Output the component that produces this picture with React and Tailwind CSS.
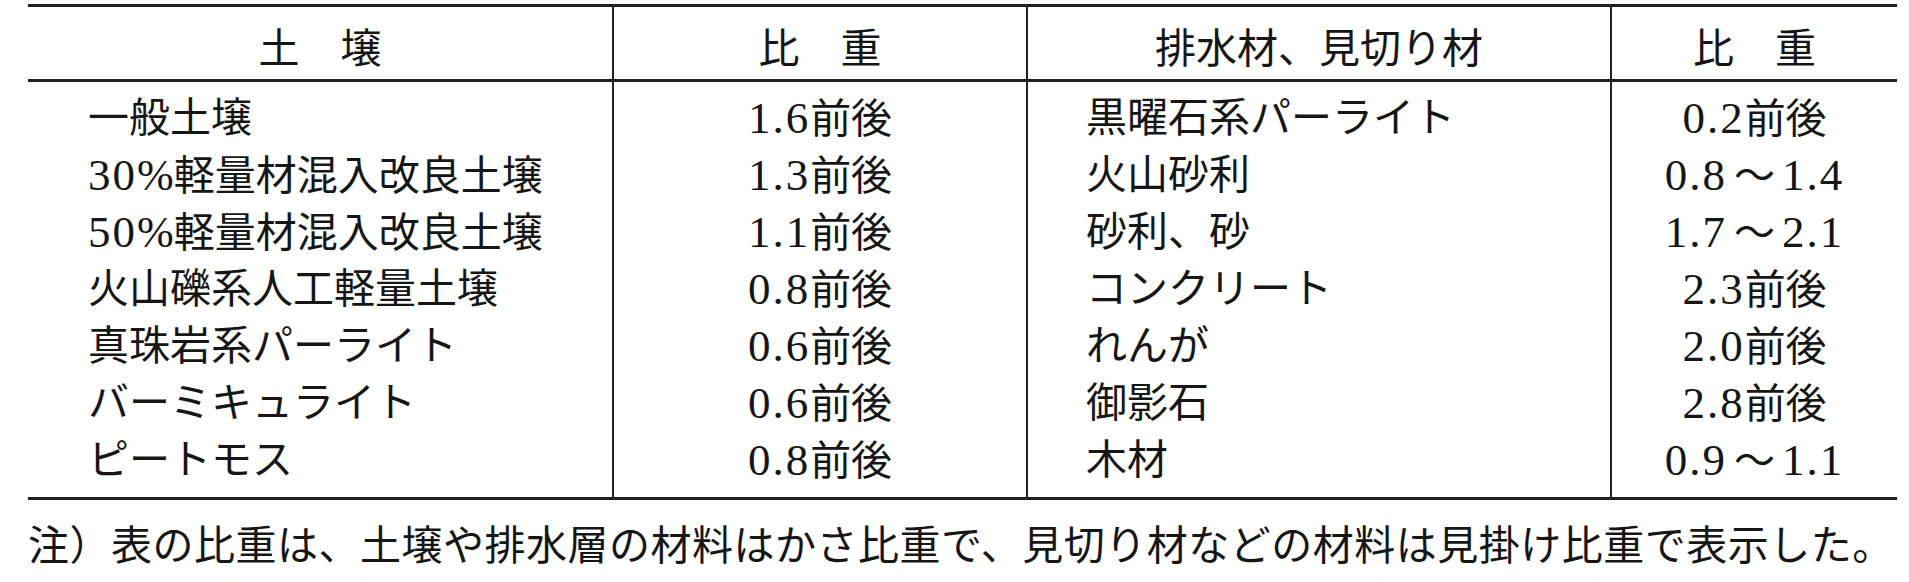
import React from "react";

const FONT = { fontFamily: '"Liberation Serif", "Noto Sans CJK JP", serif' };

const rows = [
  ["一般土壌", { n: "1.6" }, "黒曜石系パーライト", { n: "0.2" }],
  [{ p: "30" }, { n: "1.3" }, "火山砂利", { a: "0.8", b: "1.4" }],
  [{ p: "50" }, { n: "1.1" }, "砂利、砂", { a: "1.7", b: "2.1" }],
  ["火山礫系人工軽量土壌", { n: "0.8" }, "コンクリート", { n: "2.3" }],
  ["真珠岩系パーライト", { n: "0.6" }, "れんが", { n: "2.0" }],
  ["バーミキュライト", { n: "0.6" }, "御影石", { n: "2.8" }],
  ["ピートモス", { n: "0.8" }, "木材", { a: "0.9", b: "1.1" }],
];

function Cell({ v }) {
  if (typeof v === "string") return <span>{v}</span>;
  if (v.p)
    return (
      <span>
        <span className="text-[45px] tracking-[2px]">{v.p}</span>
        <span className="text-[44px]">%</span>
        <span>軽量材混入改良土壌</span>
      </span>
    );
  if (v.n)
    return (
      <span>
        <span className="text-[45px] tracking-[2px]">{v.n}</span>
        <span>前後</span>
      </span>
    );
  return (
    <span>
      <span className="text-[45px] tracking-[2px]">{v.a}</span>
      <span className="mx-[7px]">～</span>
      <span className="text-[45px] tracking-[2px]">{v.b}</span>
    </span>
  );
}

export default function App() {
  return (
    <div
      className="w-[1909px] h-[582px] bg-white text-[#161616] text-[41px] leading-[41px] overflow-hidden"
      style={FONT}
    >
      <div className="ml-[28px] mt-[4px] w-[1869px]">
        <div className="border-t-[3px] border-[#222]">
          <div className="grid grid-cols-[584px_414px_584px_287px] border-b-[3px] border-[#222]">
            <div className="h-[72px] pt-[22px] text-center">土　壌</div>
            <div className="h-[72px] pt-[22px] text-center border-l-2 border-[#222]">比　重</div>
            <div className="h-[72px] pt-[22px] text-center border-l-2 border-[#222]">排水材、見切り材</div>
            <div className="h-[72px] pt-[22px] text-center border-l-2 border-[#222]">比　重</div>
          </div>
          <div className="grid grid-cols-[584px_414px_584px_287px] border-b-[3px] border-[#222]">
            <div className="pt-[8px] pb-[8px]">
              {rows.map((r, i) => (
                <div key={i} className="h-[57px] pl-[60px] flex items-center whitespace-nowrap">
                  <Cell v={r[0]} />
                </div>
              ))}
            </div>
            <div className="pt-[8px] pb-[8px] border-l-2 border-[#222]">
              {rows.map((r, i) => (
                <div key={i} className="h-[57px] flex items-center justify-center whitespace-nowrap">
                  <Cell v={r[1]} />
                </div>
              ))}
            </div>
            <div className="pt-[8px] pb-[8px] border-l-2 border-[#222]">
              {rows.map((r, i) => (
                <div key={i} className="h-[57px] pl-[58px] flex items-center whitespace-nowrap">
                  <Cell v={r[2]} />
                </div>
              ))}
            </div>
            <div className="pt-[8px] pb-[8px] border-l-2 border-[#222]">
              {rows.map((r, i) => (
                <div key={i} className="h-[57px] flex items-center justify-center whitespace-nowrap">
                  <Cell v={r[3]} />
                </div>
              ))}
            </div>
          </div>
        </div>
        <div className="pt-[26px] whitespace-nowrap tracking-[0.5px]">
          注）表の比重は、土壌や排水層の材料はかさ比重で、見切り材などの材料は見掛け比重で表示した。
        </div>
      </div>
    </div>
  );
}
